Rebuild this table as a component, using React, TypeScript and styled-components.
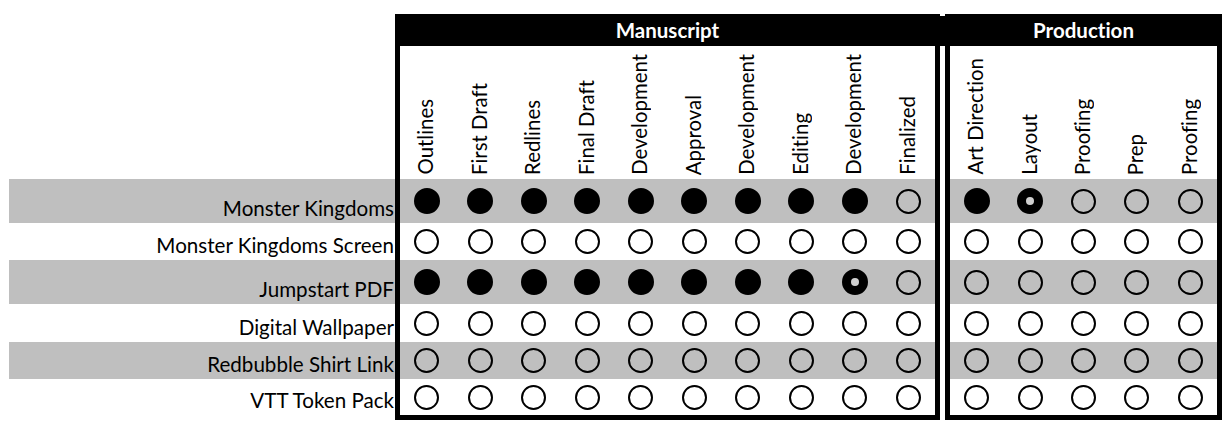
import React from 'react';
import styled, { createGlobalStyle } from 'styled-components';

type Mark = 'done' | 'partial' | 'empty';

const GlobalStyle = createGlobalStyle`
  *, *::before, *::after {
    box-sizing: border-box;
  }
  html, body {
    margin: 0;
    padding: 0;
    background: #ffffff;
  }
  body {
    font-family: Lato, "Open Sans", sans-serif;
    font-variant-ligatures: none;
    color: #000;
  }
`;

const ROW_HEIGHTS = [44, 37, 44, 38, 37, 36];

const manuscriptSteps = [
  'Outlines',
  'First Draft',
  'Redlines',
  'Final Draft',
  'Development',
  'Approval',
  'Development',
  'Editing',
  'Development',
  'Finalized',
];

const productionSteps = ['Art Direction', 'Layout', 'Proofing', 'Prep', 'Proofing'];

interface Product {
  name: string;
  manuscript: Mark[];
  production: Mark[];
}

const fill = (count: number, mark: Mark): Mark[] => Array.from({ length: count }, () => mark);

const products: Product[] = [
  {
    name: 'Monster Kingdoms',
    manuscript: [...fill(9, 'done'), 'empty'],
    production: ['done', 'partial', ...fill(3, 'empty')],
  },
  {
    name: 'Monster Kingdoms Screen',
    manuscript: fill(10, 'empty'),
    production: fill(5, 'empty'),
  },
  {
    name: 'Jumpstart PDF',
    manuscript: [...fill(8, 'done'), 'partial', 'empty'],
    production: fill(5, 'empty'),
  },
  {
    name: 'Digital Wallpaper',
    manuscript: fill(10, 'empty'),
    production: fill(5, 'empty'),
  },
  {
    name: 'Redbubble Shirt Link',
    manuscript: fill(10, 'empty'),
    production: fill(5, 'empty'),
  },
  {
    name: 'VTT Token Pack',
    manuscript: fill(10, 'empty'),
    production: fill(5, 'empty'),
  },
];

const Sheet = styled.div`
  display: flex;
  align-items: flex-start;
  padding: 14px 0 0 9px;
`;

const LabelColumn = styled.div`
  width: 386px;
  flex: none;
  padding-top: 165px;
`;

const Stripe = styled.div<{ $shaded: boolean; $height: number }>`
  height: ${p => p.$height}px;
  background: ${p => (p.$shaded ? '#bfbfbf' : 'transparent')};
`;

const NameCell = styled(Stripe)`
  display: flex;
  align-items: flex-end;
  justify-content: flex-end;
  padding-right: 1px;
  padding-bottom: 2px;
  font-size: 20.6px;
  line-height: 25px;
  white-space: nowrap;
`;

const Panel = styled.div<{ $width: number }>`
  width: ${p => p.$width}px;
  flex: none;
  border: 5px solid #000;
  border-top: none;
`;

const PanelHeader = styled.div`
  height: 32px;
  margin: 0 -5px;
  background: #000;
  color: #fff;
  font-weight: 700;
  font-size: 20.5px;
  display: flex;
  align-items: center;
  justify-content: center;
`;

const Divider = styled.div`
  width: 5px;
  flex: none;
  height: 32px;
  background: #000;
  border-top: 2px solid #fff;
`;

const Grid = styled.div<{ $cols: number }>`
  display: grid;
  grid-template-columns: repeat(${p => p.$cols}, 1fr);
`;

const StepCell = styled.div`
  height: 133px;
  display: flex;
  align-items: flex-end;
  justify-content: center;
  padding-bottom: 4px;
`;

const StepLabel = styled.span`
  writing-mode: vertical-rl;
  transform: rotate(180deg);
  font-size: 20.4px;
  line-height: 24px;
  white-space: nowrap;
  margin-right: 3px;
`;

const Row = styled(Grid)<{ $shaded: boolean; $height: number }>`
  height: ${p => p.$height}px;
  background: ${p => (p.$shaded ? '#bfbfbf' : '#fff')};
  align-items: center;
  justify-items: center;
`;

const Dot = styled.div<{ $mark: Mark }>`
  width: ${p => (p.$mark === 'empty' ? 25 : 26)}px;
  height: ${p => (p.$mark === 'empty' ? 25 : 26)}px;
  border-radius: 50%;
  display: flex;
  align-items: center;
  justify-content: center;
  border: 2px solid #000;
  background: ${p => (p.$mark === 'empty' ? 'transparent' : '#000')};

  &::after {
    content: '';
    display: ${p => (p.$mark === 'partial' ? 'block' : 'none')};
    width: 8px;
    height: 8px;
    border-radius: 50%;
    background: #d0d0d0;
  }
`;

interface StageProps {
  title: string;
  steps: string[];
  width: number;
  pick: (p: Product) => Mark[];
}

const Stage = ({ title, steps, width, pick }: StageProps) => (
  <Panel $width={width}>
    <PanelHeader>{title}</PanelHeader>
    <Grid $cols={steps.length}>
      {steps.map((step, i) => (
        <StepCell key={i}>
          <StepLabel>{step}</StepLabel>
        </StepCell>
      ))}
    </Grid>
    {products.map((product, r) => (
      <Row key={product.name} $cols={steps.length} $shaded={r % 2 === 0} $height={ROW_HEIGHTS[r]}>
        {pick(product).map((mark, i) => (
          <Dot key={i} $mark={mark} />
        ))}
      </Row>
    ))}
  </Panel>
);

export default function App() {
  return (
    <>
      <GlobalStyle />
      <Sheet>
        <LabelColumn>
          {products.map((product, r) => (
            <NameCell key={product.name} $shaded={r % 2 === 0} $height={ROW_HEIGHTS[r]}>
              {product.name}
            </NameCell>
          ))}
        </LabelColumn>
        <Stage title="Manuscript" steps={manuscriptSteps} width={545} pick={p => p.manuscript} />
        <Divider />
        <Stage title="Production" steps={productionSteps} width={277} pick={p => p.production} />
      </Sheet>
    </>
  );
}
